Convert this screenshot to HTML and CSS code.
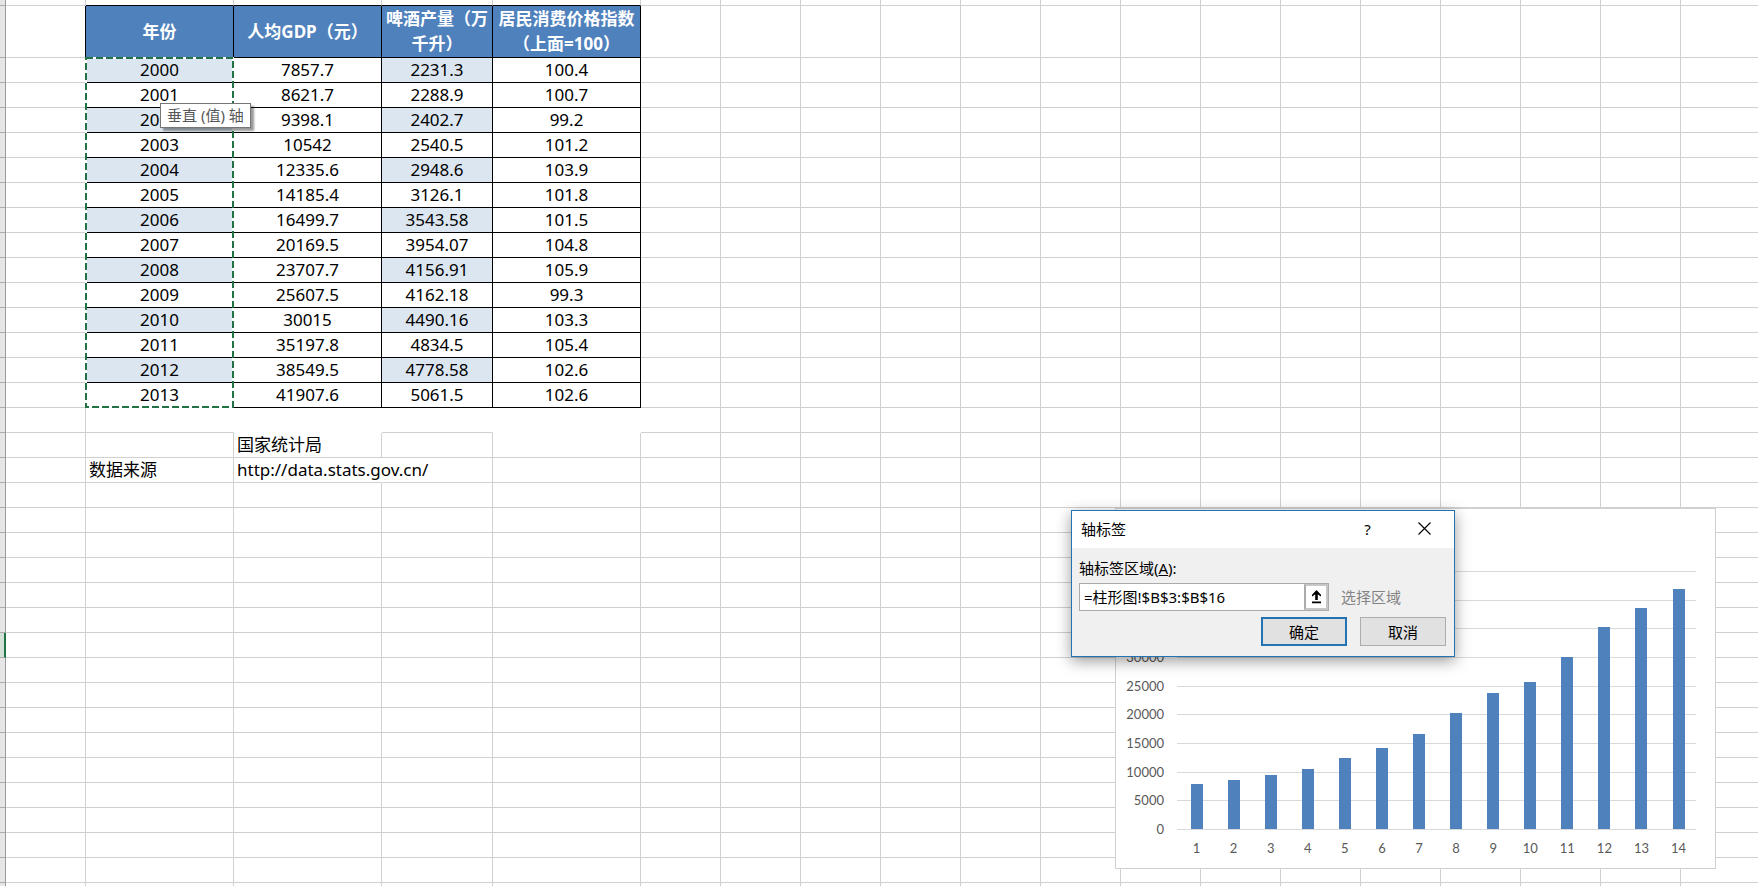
FILE: index.html
```html
<!DOCTYPE html>
<html lang="zh-CN">
<head>
<meta charset="utf-8">
<title>柱形图</title>
<link rel="stylesheet" href="styles.css">
</head>
<body>
<main class="sheet">
  <table class="grid" id="grid">
    <colgroup>
      <col class="col-head"><col class="col-narrow"><col class="col-wide"><col class="col-wide"><col class="col-mid"><col class="col-wide">
      <col class="col-narrow" span="13"><col>
    </colgroup>
    <tbody></tbody>
  </table>

  <svg class="marquee" aria-hidden="true"><rect class="marquee-base" x="1" y="1"/><rect class="marquee-dash" x="1" y="1"/></svg>
  <div class="tooltip" role="tooltip">垂直 (值) 轴</div>

  <section class="chart" aria-label="人均GDP">
    <div class="y-axis" id="y-axis"></div>
    <div class="lines" id="lines"></div>
    <div class="bars" id="bars"></div>
    <div class="x-axis" id="x-axis"></div>
  </section>

  <form class="dialog" role="dialog" aria-labelledby="dialog-title">
    <header class="dialog-bar">
      <h1 class="dialog-title" id="dialog-title">轴标签</h1>
      <button class="bar-button" type="button" aria-label="帮助">?</button>
      <button class="bar-button" type="button" aria-label="关闭">
        <svg width="13" height="13" viewBox="0 0 13 13"><path d="M.5 .5l12 12M12.5 .5l-12 12" fill="none" stroke="#000" stroke-width="1.1"/></svg>
      </button>
    </header>
    <div class="dialog-body">
      <label class="range-label" for="range">轴标签区域(<u>A</u>):</label>
      <div class="range-row">
        <div class="range-box">
          <input class="range-input" id="range" type="text" value="=柱形图!$B$3:$B$16">
          <button class="range-pick" type="button" aria-label="选择">
            <svg width="11" height="14" viewBox="0 0 11 14"><path d="M5.500 0L10 4.800V6.500L6.800 4.500V10H4.200V4.500L1 6.500V4.800zM1 11.500h9v1.800H1z" fill="#000"/></svg>
          </button>
        </div>
        <span class="range-hint">选择区域</span>
      </div>
      <div class="actions">
        <button class="action action-default" type="submit">确定</button>
        <button class="action" type="button">取消</button>
      </div>
    </div>
  </form>
</main>
<script src="sheet.js"></script>
</body>
</html>
```
FILE: styles.css
```css
* { box-sizing: border-box; }

body {
  margin: 0;
  background: #fff;
  color: #000;
  font-family: "Noto Sans", "Noto Sans CJK SC", sans-serif;
  font-size: 17px;
}

button, input { font: inherit; color: inherit; }

.sheet {
  position: relative;
  height: 100vh;
  overflow: hidden;
}

/* Worksheet */
.grid {
  width: 100%;
  table-layout: fixed;
  border-collapse: separate;
  border-spacing: 0;
}
.col-head { width: 6px; }
.col-narrow { width: 80px; }
.col-mid { width: 111px; }
.col-wide { width: 148px; }

.grid tr { height: 25px; }
.grid .row-top { height: 6px; }
.grid .row-title { height: 52px; }

.grid td, .grid th {
  padding: 0;
  border-right: 1px solid #d0d0d0;
  border-bottom: 1px solid #d0d0d0;
  line-height: 24px;
  white-space: nowrap;
  font-weight: 400;
}
.grid td:last-child { border-right: 0; }
.grid .gutter {
  background: #e6e6e6;
  border-right-color: #9b9b9b;
  border-bottom-color: #ababab;
}
.grid .gutter-active {
  background: #d2e0d8;
  border-right: 2px solid #217346;
}
.grid .title {
  padding-bottom: 1px;
  background: #4f81bd;
  color: #fff;
  border-color: #000;
  font-weight: 700;
  line-height: 25px;
  white-space: normal;
}
.grid .value {
  text-align: center;
  border-color: #000;
}
.grid .banded { background: #dce6f1; }
.grid .edge-right { border-right-color: #000; }
.grid .edge-bottom { border-bottom-color: #000; }
.grid .open-right { border-right-color: transparent; }
.grid .open-bottom { border-bottom-color: transparent; }
.grid .note { padding-left: 3px; }

.marquee {
  position: absolute;
  left: 85px;
  top: 57px;
  width: 149px;
  height: 351px;
}
.marquee rect {
  width: 147px;
  height: 349px;
  fill: none;
  stroke-width: 2px;
}
.marquee-base { stroke: #fff; }
.marquee-dash { stroke: #217346; stroke-dasharray: 7 3; }

.tooltip {
  position: absolute;
  left: 160px;
  top: 103px;
  padding: 0 6px;
  border: 1px solid #767676;
  background: #fff;
  color: #575757;
  box-shadow: 3px 3px 2px rgba(0, 0, 0, .4);
  font-size: 15px;
  line-height: 23px;
}

/* Chart */
.chart {
  position: absolute;
  left: 1115px;
  top: 508px;
  width: 601px;
  height: 361px;
  padding: 62px 19px 8px 0;
  border: 1px solid #d0d0d0;
  background: #fff;
  color: #595959;
  font-family: Lato, sans-serif;
  font-size: 13px;
  display: grid;
  grid-template-columns: 61px 1fr;
  grid-template-rows: 259px 1fr;
}
.y-axis, .lines {
  display: flex;
  flex-direction: column;
  justify-content: space-between;
}
.y-axis {
  margin: -8px 0;
  padding-right: 13px;
  text-align: right;
  line-height: 17px;
}
.lines { grid-area: 1 / 2; }
.line { height: 1px; background: #d9d9d9; }
.bars {
  grid-area: 1 / 2;
  display: flex;
  align-items: flex-end;
  margin: 0 -1px 0 1px;
  padding-bottom: 1px;
}
.bar-slot {
  flex: 1;
  height: 100%;
  display: flex;
  justify-content: center;
  align-items: flex-end;
}
.bar { width: 12px; background: #4f81bd; }
.x-axis {
  grid-column: 2;
  display: flex;
  margin: 0 -1px 0 1px;
  padding-top: 10px;
  line-height: 17px;
}
.x-label { flex: 1; text-align: center; }

/* Dialog */
.dialog {
  position: absolute;
  left: 1071px;
  top: 510px;
  width: 384px;
  border: 1px solid #2272b4;
  background: #f0f0f0;
  box-shadow: 0 4px 14px rgba(0, 0, 0, .4);
  font-size: 15px;
  line-height: 20px;
}
.dialog-bar {
  display: flex;
  align-items: center;
  height: 37px;
  padding: 0 1px 2px 9px;
  background: #fff;
}
.dialog-title {
  flex: 1;
  margin: 0;
  font-size: 15px;
  font-weight: 400;
}
.bar-button {
  display: grid;
  place-items: center;
  width: 57px;
  height: 30px;
  padding: 0;
  border: 0;
  background: none;
}
.dialog-body { padding: 9px 8px 10px 7px; }
.range-label { display: block; line-height: 22px; }
.range-row {
  display: flex;
  align-items: center;
  gap: 12px;
  margin-top: 4px;
}
.range-box {
  display: flex;
  width: 250px;
  height: 28px;
  border: 1px solid #ababab;
  background: #fff;
}
.range-input {
  flex: 1;
  min-width: 0;
  padding: 0 4px;
  border: 0;
  outline: 0;
  background: none;
}
.range-pick {
  display: grid;
  place-items: center;
  width: 24px;
  padding: 0;
  border: 2px solid #c6c6c6;
  border-left-color: #ababab;
  background: #fff;
}
.range-hint { color: #838383; }
.actions {
  display: flex;
  justify-content: flex-end;
  gap: 13px;
  margin-top: 6px;
}
.action {
  width: 86px;
  height: 29px;
  padding: 0;
  border: 1px solid #adadad;
  background: #e1e1e1;
}
.action-default { border: 2px solid #2272b4; }
```
FILE: sheet.js
```js
const titles = ["年份", "人均GDP（元）", "啤酒产量（万千升）", "居民消费价格指数（上面=100）"];
const rows = [
  ["2000", "7857.7", "2231.3", "100.4"],
  ["2001", "8621.7", "2288.9", "100.7"],
  ["2002", "9398.1", "2402.7", "99.2"],
  ["2003", "10542", "2540.5", "101.2"],
  ["2004", "12335.6", "2948.6", "103.9"],
  ["2005", "14185.4", "3126.1", "101.8"],
  ["2006", "16499.7", "3543.58", "101.5"],
  ["2007", "20169.5", "3954.07", "104.8"],
  ["2008", "23707.7", "4156.91", "105.9"],
  ["2009", "25607.5", "4162.18", "99.3"],
  ["2010", "30015", "4490.16", "103.3"],
  ["2011", "35197.8", "4834.5", "105.4"],
  ["2012", "38549.5", "4778.58", "102.6"],
  ["2013", "41907.6", "5061.5", "102.6"]
];
const columnCount = 20;
const rowCount = 36;
const activeRow = 25;

// Cells outside the data block: "row,column" -> [text, classes]
const extras = {
  "16,2": ["", "open-right"],
  "16,3": ["", "open-right open-bottom"],
  "16,4": ["", "open-right"],
  "16,5": ["", "open-right open-bottom"],
  "17,3": ["国家统计局", "note"],
  "18,2": ["数据来源", "note"],
  "18,3": ["http://data.stats.gov.cn/", "note open-right"]
};

const body = document.querySelector("#grid tbody");
for (let r = 0; r < rowCount; r++) {
  const tr = body.insertRow();
  if (r === 0) tr.className = "row-top";
  if (r === 1) tr.className = "row-title";
  for (let c = 0; c < columnCount; c++) {
    const inBlock = c >= 2 && c <= 5;
    const cell = document.createElement(r === 1 && inBlock ? "th" : "td");
    if (c === 0) {
      cell.className = r === activeRow ? "gutter gutter-active" : "gutter";
    } else if (r === 0 && inBlock) {
      cell.className = "edge-bottom";
    } else if (r === 1 && inBlock) {
      cell.className = "title";
      cell.textContent = titles[c - 2];
    } else if (r >= 2 && r <= 15 && inBlock) {
      const banded = r % 2 === 0 && (c === 2 || c === 4);
      cell.className = banded ? "value banded" : "value";
      cell.textContent = rows[r - 2][c - 2];
    } else if (r >= 1 && r <= 15 && c === 1) {
      cell.className = "edge-right";
    } else if (extras[r + "," + c]) {
      [cell.textContent, cell.className] = extras[r + "," + c];
    }
    tr.append(cell);
  }
}

function add(parent, className, text) {
  const el = document.createElement("div");
  el.className = className;
  if (text !== undefined) el.textContent = text;
  parent.append(el);
  return el;
}

const axisMax = 45000;
const byId = id => document.getElementById(id);
for (let v = axisMax; v >= 0; v -= 5000) {
  add(byId("y-axis"), "y-label", v);
  add(byId("lines"), "line");
}
rows.forEach((row, i) => {
  const bar = add(add(byId("bars"), "bar-slot"), "bar");
  bar.style.height = (row[1] / axisMax * 100) + "%";
  add(byId("x-axis"), "x-label", i + 1);
});
```
